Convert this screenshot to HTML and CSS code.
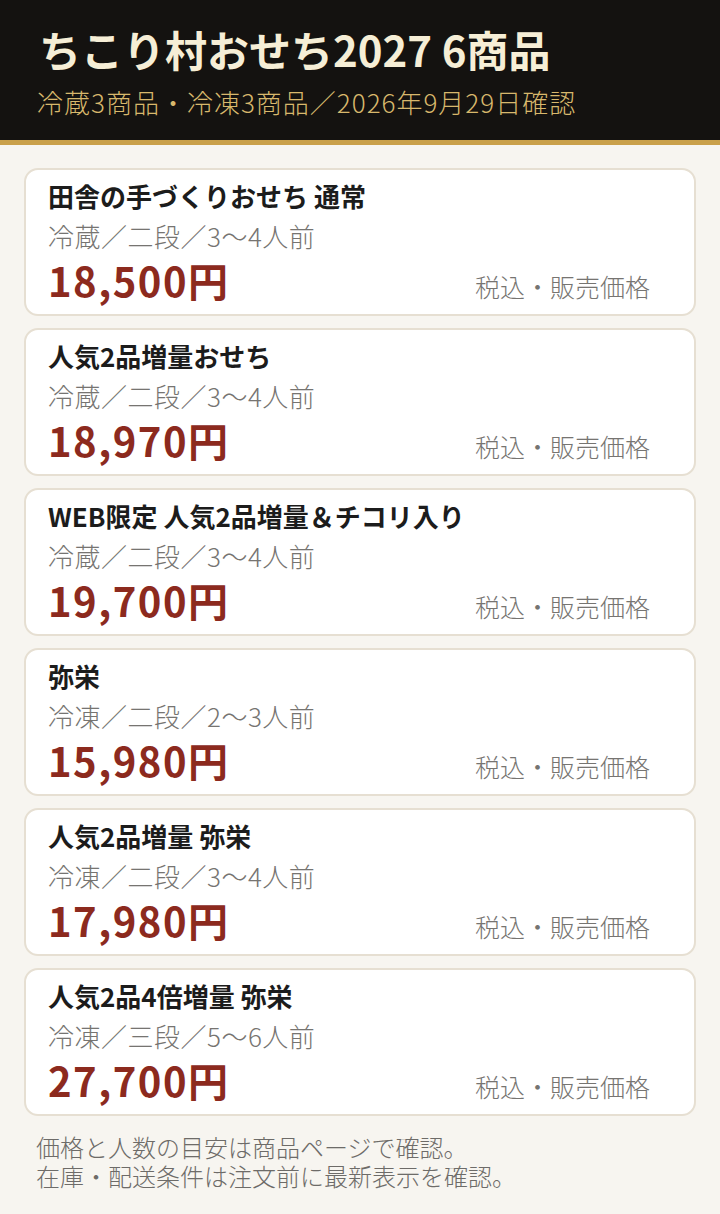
FILE: index.html
```html
<!doctype html>
<html>
    <head>
        <meta charset="utf-8">
        <meta name="viewport" content="width=device-width,initial-scale=1">
        <title>ちこり村おせち2027</title>
        <link rel="stylesheet" href="styles.css">
    </head>
    <body>
        <header class="top">
            <h1 class="top-title">ちこり村おせち2027 6商品</h1>
            <p class="top-sub">冷蔵3商品・冷凍3商品／2026年9月29日確認</p>
        </header>
        <section class="list">
            <div class="item">
                <div class="item-name">田舎の手づくりおせち 通常</div>
                <div class="item-spec">冷蔵／二段／3〜4人前</div>
                <div class="item-row">
                    <span class="item-price">18,500円</span>
                    <span class="item-note">税込・販売価格</span>
                </div>
            </div>
            <div class="item">
                <div class="item-name">人気2品増量おせち</div>
                <div class="item-spec">冷蔵／二段／3〜4人前</div>
                <div class="item-row">
                    <span class="item-price">18,970円</span>
                    <span class="item-note">税込・販売価格</span>
                </div>
            </div>
            <div class="item">
                <div class="item-name">WEB限定 人気2品増量＆チコリ入り</div>
                <div class="item-spec">冷蔵／二段／3〜4人前</div>
                <div class="item-row">
                    <span class="item-price">19,700円</span>
                    <span class="item-note">税込・販売価格</span>
                </div>
            </div>
            <div class="item">
                <div class="item-name">弥栄</div>
                <div class="item-spec">冷凍／二段／2〜3人前</div>
                <div class="item-row">
                    <span class="item-price">15,980円</span>
                    <span class="item-note">税込・販売価格</span>
                </div>
            </div>
            <div class="item">
                <div class="item-name">人気2品増量 弥栄</div>
                <div class="item-spec">冷凍／二段／3〜4人前</div>
                <div class="item-row">
                    <span class="item-price">17,980円</span>
                    <span class="item-note">税込・販売価格</span>
                </div>
            </div>
            <div class="item">
                <div class="item-name">人気2品4倍増量 弥栄</div>
                <div class="item-spec">冷凍／三段／5〜6人前</div>
                <div class="item-row">
                    <span class="item-price">27,700円</span>
                    <span class="item-note">税込・販売価格</span>
                </div>
            </div>
        </section>
        <div class="foot">
            <div class="foot-line">価格と人数の目安は商品ページで確認。</div>
            <div class="foot-line">在庫・配送条件は注文前に最新表示を確認。</div>
        </div>
    </body>
</html>
```

FILE: styles.css
```css
body {
    margin: 0;
    font-family: "Noto Sans CJK JP", "Noto Sans", sans-serif;
    background: #f7f5f0;
    color: #1c1c1c;
}
.top {
    background: #141210;
    border-bottom: 5px solid #c9a04a;
    height: 140px;
    box-sizing: content-box;
    padding: 0 30px 0 39px;
    display: flex;
    flex-direction: column;
}
.top-title {
    margin: 24px 0 0 0;
    font-size: 42px;
    line-height: 50px;
    font-weight: 600;
    color: #f6eed6;
}
.top-sub {
    margin: 11px 0 0 -2px;
    font-size: 26px;
    line-height: 34px;
    font-weight: 300;
    letter-spacing: 1px;
    color: #d8b86c;
}
.list {
    padding: 23px 24px 0 24px;
    display: flex;
    flex-direction: column;
    gap: 12px;
}
.item {
    background: #fff;
    border: 2px solid #e6dfd2;
    border-radius: 14px;
    height: 148px;
    box-sizing: border-box;
    padding: 9px 44px 0 22px;
}
.item-name {
    font-size: 26px;
    line-height: 34px;
    font-weight: 600;
    color: #1c1c1c;
}
.item-spec {
    margin-top: 5px;
    font-size: 26px;
    line-height: 36px;
    font-weight: 300;
    letter-spacing: 0.5px;
    color: #767471;
}
.item-row {
    display: flex;
    justify-content: space-between;
    align-items: baseline;
    margin-top: 4px;
}
.item-price {
    font-size: 40px;
    line-height: 44px;
    font-weight: 600;
    letter-spacing: 1.5px;
    color: #8c2a1e;
}
.item-note {
    font-size: 25px;
    font-weight: 300;
    color: #767471;
}
.foot {
    margin: 16px 0 0 0;
    padding: 0 36px;
    font-size: 24px;
    font-weight: 300;
    color: #6d6b68;
}
.foot-line {
    line-height: 29px;
}
```
